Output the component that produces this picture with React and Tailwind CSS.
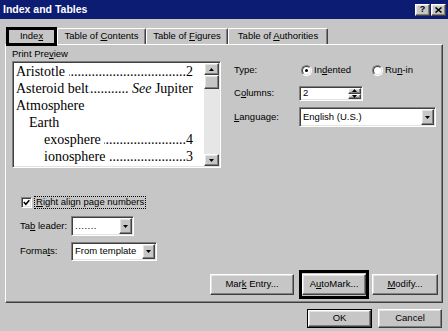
import React from 'react';

const face = 'bg-[#c6c6c6]';
const raised =
  'border border-t-white border-l-white border-r-[#404040] border-b-[#404040] bg-[#c6c6c6] shadow-[inset_-1px_-1px_0_#808080,inset_1px_1px_0_#e3e3e3]';
const sunken =
  'border border-t-[#808080] border-l-[#808080] border-r-white border-b-white p-px bg-white shadow-[inset_1px_1px_0_#404040,inset_-1px_-1px_0_#e3e3e3]';

const dots = '.'.repeat(90);

function Arrow({ up }) {
  return (
    <svg width="5" height="3" viewBox="0 0 5 3" className="block">
      <polygon points={up ? '0,3 5,3 2.5,0' : '0,0 5,0 2.5,3'} fill="#000" />
    </svg>
  );
}

function DropBtn() {
  return (
    <div className={`${raised} flex w-[13px] items-center justify-center`}>
      <Arrow />
    </div>
  );
}

function Combo({ className, children }) {
  return (
    <div className={`${sunken} flex ${className}`}>
      <div className="flex flex-1 items-center overflow-hidden whitespace-nowrap pl-[2px]">{children}</div>
      <DropBtn />
    </div>
  );
}

function Radio({ checked }) {
  return (
    <span className="flex h-[11px] w-[11px] rounded-full border border-t-[#808080] border-l-[#808080] border-r-white border-b-white">
      <span className="flex flex-1 items-center justify-center rounded-full border border-t-[#404040] border-l-[#404040] border-r-[#e3e3e3] border-b-[#e3e3e3] bg-white">
        {checked && <span className="h-[3px] w-[3px] rounded-full bg-black" />}
      </span>
    </span>
  );
}

function Button({ className, children }) {
  return <div className={`${raised} flex items-center justify-center ${className}`}>{children}</div>;
}

function Entry({ level, label, page, see }) {
  const pl = level === 0 ? 'pl-[2px]' : level === 1 ? 'pl-[15px]' : 'pl-[30px]';
  return (
    <div className={`flex h-[17px] items-center whitespace-nowrap ${pl}`}>
      <span className="shrink-0">{page ? `${label}\u00a0` : label}</span>
      {(page || see) && (
        <span className="flex flex-1 justify-end overflow-hidden">
          <span className="shrink-0">{dots}</span>
        </span>
      )}
      {page && <span className="shrink-0">{page}</span>}
      {see && (
        <span className="shrink-0">
          {'\u00a0'}
          <i>See</i> {see}
        </span>
      )}
    </div>
  );
}

const entries = [
  { level: 0, label: 'Aristotle', page: '2' },
  { level: 0, label: 'Asteroid belt', see: 'Jupiter' },
  { level: 0, label: 'Atmosphere' },
  { level: 1, label: 'Earth' },
  { level: 2, label: 'exosphere', page: '4' },
  { level: 2, label: 'ionosphere', page: '3' },
  { level: 2, label: 'mesosphere', page: '3' },
];

function Tab({ className, children }) {
  return (
    <div
      className={`flex h-[16px] items-center justify-center rounded-t-[2px] border-t border-l border-r border-t-white border-l-white border-r-[#404040] shadow-[inset_-1px_0_0_#808080] ${className}`}
    >
      {children}
    </div>
  );
}

export default function App() {
  return (
    <div className={`flex h-[331px] w-[448px] flex-col overflow-hidden ${face} font-['Liberation_Sans',Arial,sans-serif] text-[9.5px] text-black`}>
      {/* Title bar */}
      <div className="flex h-[19px] shrink-0 items-center bg-[#0b1c72] pl-[3px]">
        <span className="text-[10.5px] font-bold text-white">Index and Tables</span>
        <div className="ml-auto mr-[2px] flex gap-[1px]">
          <div className={`${raised} flex h-[12px] w-[15px] items-center justify-center text-[9px] font-bold leading-none`}>?</div>
          <div className={`${raised} flex h-[12px] w-[15px] items-center justify-center`}>
            <svg width="7" height="6" viewBox="0 0 7 6">
              <path d="M0.5 0.5 L6.5 5.5 M6.5 0.5 L0.5 5.5" stroke="#000" strokeWidth="1.5" />
            </svg>
          </div>
        </div>
      </div>

      {/* Tabs */}
      <div className="mt-[8px] flex h-[17px] shrink-0 items-end pl-[6px]">
        <div className={`relative z-10 mb-[-2px] flex h-[19px] w-[51px] items-center justify-center border-[3px] border-black ${face}`}>
          <span>
            Inde<u>x</u>
          </span>
        </div>
        <Tab className="w-[89px]">
          <span>
            Table of <u>C</u>ontents
          </span>
        </Tab>
        <Tab className="w-[82px]">
          <span>
            Table of <u>F</u>igures
          </span>
        </Tab>
        <Tab className="w-[100px]">
          <span>
            Table of <u>A</u>uthorities
          </span>
        </Tab>
      </div>

      {/* Panel */}
      <div className="ml-[5px] flex h-[259px] w-[438px] shrink-0 flex-col border border-t-white border-l-white border-r-[#404040] border-b-[#404040] shadow-[inset_-1px_-1px_0_#808080]">
        <div className="flex">
          {/* Left column */}
          <div className="ml-[6px] flex w-[209px] flex-col">
            <div className="mt-[3px] h-[12px] leading-[12px]">
              Print Pre<u>v</u>iew
            </div>
            <div className={`${sunken} mt-[1px] flex h-[107px] w-[209px]`}>
              <div className="flex-1 overflow-hidden pr-[11px] font-['Liberation_Serif','Times_New_Roman',serif] text-[14px] leading-[17px]">
                {entries.map((e) => (
                  <Entry key={e.label} {...e} />
                ))}
              </div>
              <div className="flex w-[15px] flex-col bg-[#e6e6e6]">
                <div className={`${raised} flex h-[12px] items-center justify-center`}>
                  <Arrow up />
                </div>
                <div className={`${raised} h-[14px]`} />
                <div className="flex-1" />
                <div className={`${raised} flex h-[12px] items-center justify-center`}>
                  <Arrow />
                </div>
              </div>
            </div>

            <div className="mt-[28px] flex h-[13px] items-center pl-[9px]">
              <span className={`${sunken} flex h-[11px] w-[11px] items-center justify-center p-0`}>
                <svg width="7" height="7" viewBox="0 0 7 7">
                  <polyline points="0.8,3 2.8,5.2 6.3,1.2" fill="none" stroke="#000" strokeWidth="1.6" />
                </svg>
              </span>
              <span className="ml-[2px] flex h-[13px] items-center border border-dotted border-black px-[1px]">
                <u>R</u>ight align page numbers
              </span>
            </div>

            <div className="mt-[7px] flex h-[20px] items-center pl-[8px]">
              <span className="w-[51px]">
                Ta<u>b</u> leader:
              </span>
              <Combo className="h-[20px] w-[63px]">
                <span className="tracking-[0.5px]">.......</span>
              </Combo>
            </div>

            <div className="mt-[6px] flex h-[19px] items-center pl-[8px]">
              <span className="w-[51px]">
                Forma<u>t</u>s:
              </span>
              <Combo className="h-[19px] w-[86px]">From template</Combo>
            </div>
          </div>

          {/* Right column */}
          <div className="ml-[13px] flex flex-col">
            <div className="mt-[18px] flex h-[14px] items-center">
              <span className="w-[67px]">Type:</span>
              <div className="flex w-[71px] items-center gap-[2px]">
                <Radio checked />
                <span>
                  In<u>d</u>ented
                </span>
              </div>
              <div className="flex items-center gap-[2px]">
                <Radio />
                <span>
                  Ru<u>n</u>-in
                </span>
              </div>
            </div>

            <div className="mt-[9px] flex h-[15px] items-center">
              <span className="w-[65px]">
                C<u>o</u>lumns:
              </span>
              <div className={`${sunken} flex h-[15px] w-[64px]`}>
                <div className="flex flex-1 items-center pl-[2px]">2</div>
                <div className="flex w-[13px] flex-col">
                  <div className={`${raised} flex flex-1 items-center justify-center`}>
                    <Arrow up />
                  </div>
                  <div className={`${raised} flex flex-1 items-center justify-center`}>
                    <Arrow />
                  </div>
                </div>
              </div>
            </div>

            <div className="mt-[6px] flex h-[20px] items-center">
              <span className="w-[65px]">
                <u>L</u>anguage:
              </span>
              <Combo className="h-[20px] w-[137px]">English (U.S.)</Combo>
            </div>
          </div>
        </div>

        {/* Panel buttons */}
        <div className="mt-auto flex items-center justify-end pb-[3px] pr-[4px]">
          <Button className="h-[21px] w-[84px]">
            <span>
              Mar<u>k</u> Entry...
            </span>
          </Button>
          <div className="ml-[5px] border-[3px] border-black py-[1px]">
            <Button className="h-[21px] w-[64px]">
              <span>
                A<u>u</u>toMark...
              </span>
            </Button>
          </div>
          <Button className="ml-[3px] h-[21px] w-[66px]">
            <span>
              <u>M</u>odify...
            </span>
          </Button>
        </div>
      </div>

      {/* Dialog buttons */}
      <div className="mt-[6px] flex justify-end pr-[6px]">
        <div className="border border-black">
          <Button className="h-[17px] w-[63px]">OK</Button>
        </div>
        <Button className="ml-[6px] h-[19px] w-[64px]">Cancel</Button>
      </div>
    </div>
  );
}
